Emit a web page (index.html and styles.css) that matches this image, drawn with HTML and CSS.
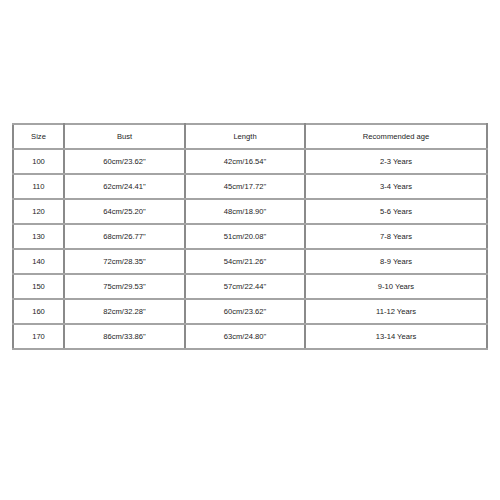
FILE: index.html
```html
<!DOCTYPE html>
<html>
<head>
<meta charset="utf-8">
<link rel="stylesheet" href="styles.css">
</head>
<body>
<div class="page">
<table class="size-table">
<colgroup>
<col class="c-size"><col class="c-bust"><col class="c-length"><col class="c-age">
</colgroup>
<tr><td>Size</td><td>Bust</td><td>Length</td><td>Recommended age</td></tr>
<tr><td>100</td><td>60cm/23.62"</td><td>42cm/16.54"</td><td>2-3 Years</td></tr>
<tr><td>110</td><td>62cm/24.41"</td><td>45cm/17.72"</td><td>3-4 Years</td></tr>
<tr><td>120</td><td>64cm/25.20"</td><td>48cm/18.90"</td><td>5-6 Years</td></tr>
<tr><td>130</td><td>68cm/26.77"</td><td>51cm/20.08"</td><td>7-8 Years</td></tr>
<tr><td>140</td><td>72cm/28.35"</td><td>54cm/21.26"</td><td>8-9 Years</td></tr>
<tr><td>150</td><td>75cm/29.53"</td><td>57cm/22.44"</td><td>9-10 Years</td></tr>
<tr><td>160</td><td>82cm/32.28"</td><td>60cm/23.62"</td><td>11-12 Years</td></tr>
<tr><td>170</td><td>86cm/33.86"</td><td>63cm/24.80"</td><td>13-14 Years</td></tr>
</table>
</div>
</body>
</html>
```
FILE: styles.css
```css
html, body {
  margin: 0;
  padding: 0;
  background: #ffffff;
}
.page {
  padding: 123px 0 0 12px;
}
.size-table {
  border-collapse: collapse;
  table-layout: fixed;
  width: 474px;
  font-family: "Liberation Sans", Arial, sans-serif;
  font-size: 7.6px;
  color: #1c1c1c;
}
.c-size { width: 51px; }
.c-bust { width: 121px; }
.c-length { width: 120px; }
.c-age { width: 182px; }
.size-table td {
  height: 23px;
  padding: 0;
  text-align: center;
  vertical-align: middle;
  border-top: 2px solid #a4a4a4;
  border-bottom: 2px solid #a4a4a4;
  border-left: 2px solid #8a8a8a;
  border-right: 2px solid #8a8a8a;
}
```
